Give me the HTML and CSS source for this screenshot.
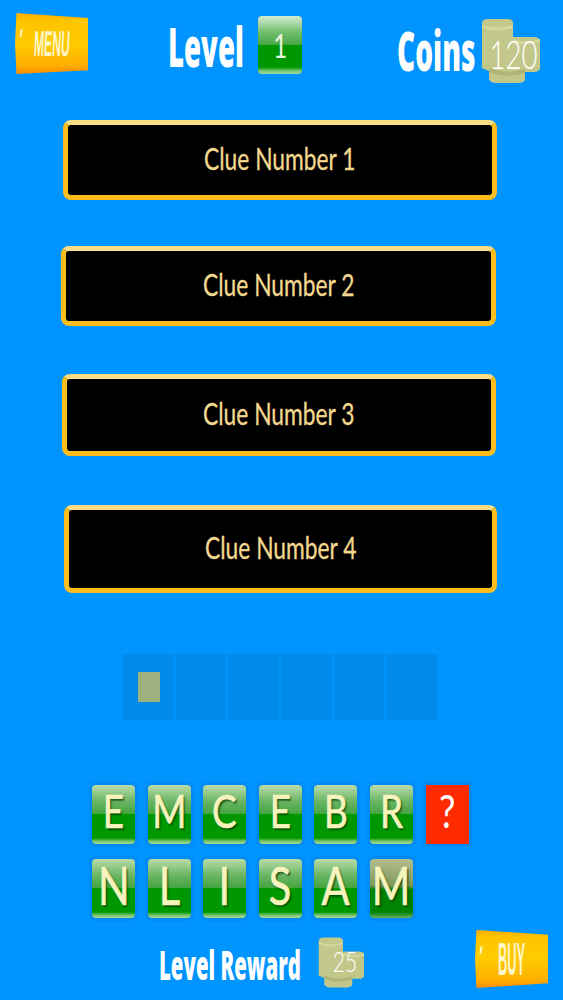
FILE: index.html
```html
<!DOCTYPE html>
<html lang="en">
<head>
    <meta charset="UTF-8">
    <meta name="viewport" content="width=device-width, initial-scale=1.0">
    <title>Clue Game</title>
    <link rel="stylesheet" href="styles.css">
</head>
<body>
    <svg class="defs" width="0" height="0">
        <symbol id="coins" viewBox="0 0 59 64">
            <path d="M1 4 Q1 0 8 0 L26 0 Q32 0 32 4 L32 18 L52 18 Q59 18 59 22 L59 49 Q59 53 52 53 L44 53 L44 60 Q44 64 36 64 L16 64 Q9 64 8 60 L8 52 L1 49 Z" fill="#c2c88a"/>
            <path d="M1 6 Q16 11 32 6 L32 9 Q16 14 1 9 Z" fill="#d2d69f"/>
            <path d="M32 20 Q45 25 59 20 L59 23 Q45 28 32 23 Z" fill="#d2d69f"/>
            <path d="M8 49 Q26 56 44 50 L44 54 Q26 60 8 53 Z" fill="#aeb577"/>
        </symbol>
    </svg>

    <div class="screen">
        <header class="top-bar">
            <button class="gold-btn menu-btn"><span>MENU</span></button>
            <div class="title level-title"><span>Level</span></div>
            <div class="level-tile"><span>1</span></div>
            <div class="title coins-title"><span>Coins</span></div>
            <div class="coin-stack">
                <svg><use href="#coins"/></svg>
                <span class="coin-count">120</span>
            </div>
        </header>

        <div class="clues">
            <div class="clue clue-1"><span>Clue Number 1</span></div>
            <div class="clue clue-2"><span>Clue Number 2</span></div>
            <div class="clue clue-3"><span>Clue Number 3</span></div>
            <div class="clue clue-4"><span>Clue Number 4</span></div>
        </div>

        <div class="slots">
            <div class="slot"><div class="slot-mark"></div></div>
            <div class="slot"></div>
            <div class="slot"></div>
            <div class="slot"></div>
            <div class="slot"></div>
            <div class="slot"></div>
        </div>

        <div class="letters">
            <div class="tile"><span>E</span></div>
            <div class="tile"><span>M</span></div>
            <div class="tile"><span>C</span></div>
            <div class="tile"><span>E</span></div>
            <div class="tile"><span>B</span></div>
            <div class="tile"><span>R</span></div>
            <div class="tile hint"><span>?</span></div>
            <div class="tile big"><span>N</span></div>
            <div class="tile big"><span>L</span></div>
            <div class="tile big"><span>I</span></div>
            <div class="tile big"><span>S</span></div>
            <div class="tile big"><span>A</span></div>
            <div class="tile big used"><span>M</span></div>
        </div>

        <footer class="bottom-bar">
            <div class="title reward-title"><span>Level Reward</span></div>
            <div class="coin-stack reward-stack">
                <svg><use href="#coins"/></svg>
                <span class="coin-count">25</span>
            </div>
            <button class="gold-btn buy-btn"><span>BUY</span></button>
        </footer>
    </div>
</body>
</html>
```

FILE: styles.css
```css
* {
    box-sizing: border-box;
}
body {
    margin: 0;
    background: #0094ff;
    font-family: "Lato", sans-serif;
}
.defs {
    position: absolute;
}
.screen {
    width: 563px;
    height: 1000px;
    overflow: hidden;
}

/* top bar */
.top-bar {
    display: flex;
    align-items: flex-start;
    height: 120px;
    padding: 13px 0 0 15px;
}
.gold-btn {
    position: relative;
    display: flex;
    align-items: center;
    justify-content: center;
    border: none;
    padding: 0;
    color: #fff6c8;
    font-family: "Liberation Sans", sans-serif;
    font-weight: bold;
    background: linear-gradient(180deg, #ffab00 0%, #ffc400 12%, #ffcb00 50%, #ffb000 85%, #ff8c00 100%);
}
.gold-btn::before {
    content: "";
    position: absolute;
    left: 5px;
    top: 16px;
    width: 2px;
    height: 8px;
    background: #fff3c0;
    transform: rotate(10deg);
}
.gold-btn span {
    display: inline-block;
}
.menu-btn {
    width: 73px;
    height: 61px;
    font-size: 36px;
    clip-path: polygon(2% 0, 100% 8%, 100% 94%, 2% 100%, 0 50%);
}
.menu-btn span {
    transform: scaleX(0.34) skewX(-8deg);
}
.title {
    color: #fff;
    font-family: "Open Sans", sans-serif;
    font-weight: 800;
    font-size: 54px;
    line-height: 56px;
    white-space: nowrap;
}
.title span {
    display: inline-block;
    transform-origin: left center;
    transform: scaleX(0.51);
}
.level-title {
    width: 90px;
    margin: 5px 0 0 80px;
}
.level-tile {
    display: flex;
    align-items: center;
    justify-content: center;
    width: 44px;
    height: 58px;
    margin-top: 3px;
    color: #e8f5e0;
    font-size: 32px;
    border-radius: 4px;
    background: linear-gradient(180deg, #d4ecd0 0%, #6dbb68 30%, #4aa846 49%, #009600 50%, #009600 88%, #7ccc78 95%, #a4dca0 100%);
}
.level-tile span {
    display: inline-block;
    transform: scaleX(0.75);
}
.coins-title {
    width: 84px;
    margin: 9px 0 0 95px;
}
.coins-title span {
    transform: scaleX(0.52);
}
.coin-stack {
    position: relative;
    width: 59px;
    height: 64px;
    margin-top: 6px;
}
.coin-stack svg {
    display: block;
    width: 100%;
    height: 100%;
}
.coin-count {
    position: absolute;
    left: -1px;
    right: -1px;
    top: 13px;
    color: #fff;
    font-size: 40px;
    font-weight: 300;
    line-height: 44px;
    text-align: center;
    transform: scaleX(0.69);
}

/* clue boxes */
.clue {
    display: flex;
    align-items: center;
    justify-content: center;
    padding-bottom: 4px;
    color: #f3d88f;
    font-size: 30px;
    background: #000;
    border: 5px solid #fdbd1a;
    border-top-color: #fbdc85;
    border-radius: 8px;
}
.clue span {
    display: inline-block;
    transform: scaleX(0.76);
    -webkit-text-stroke: 0.3px #f3d88f;
}
.clue-1 {
    width: 434px;
    height: 80px;
    margin-left: 63px;
}
.clue-2 {
    width: 435px;
    height: 80px;
    margin: 46px 0 0 61px;
}
.clue-3 {
    width: 434px;
    height: 82px;
    margin: 48px 0 0 62px;
}
.clue-4 {
    width: 433px;
    height: 88px;
    margin: 49px 0 0 64px;
}

/* answer slots */
.slots {
    display: flex;
    gap: 2px;
    width: 314px;
    height: 66px;
    margin: 61px 0 0 123px;
}
.slot {
    flex: 1;
    padding: 18px 0 0 15px;
    background: #008ae9;
}
.slot-mark {
    width: 22px;
    height: 30px;
    background: #9db27f;
}

/* letter tiles */
.letters {
    display: grid;
    grid-template-columns: repeat(7, 43px);
    grid-auto-rows: 59px;
    column-gap: 12.6px;
    row-gap: 15px;
    margin: 65px 0 0 92px;
}
.tile {
    display: flex;
    align-items: center;
    justify-content: center;
    padding-bottom: 7px;
    color: #f7f3bd;
    font-size: 46px;
    line-height: 1;
    border-radius: 4px;
    text-shadow: 2px 2px 2px rgba(0, 50, 0, 0.7);
    background: linear-gradient(180deg, #b9dcaa 0%, #6ab562 28%, #43a53f 49%, #009800 50%, #009800 90%, #76c46e 95%, #a4d898 100%);
    box-shadow: 0 0 0 3px rgba(0, 90, 170, 0.15);
}
.tile span {
    display: inline-block;
    transform: scaleX(0.8);
    -webkit-text-stroke: 0.7px #f7f3bd;
}
.tile.big {
    font-size: 52px;
}
.tile.hint {
    color: #fff;
    font-size: 46px;
    text-shadow: none;
    border-radius: 0;
    background: #ff2a00;
}
.tile.hint span {
    -webkit-text-stroke: 0;
}
.tile.used {
    background: linear-gradient(180deg, #b5bd8e 0%, #7d9a5c 45%, #008300 52%, #008300 90%, #6cb060 100%);
}

/* bottom bar */
.bottom-bar {
    display: flex;
    align-items: flex-start;
    margin-top: 12px;
    padding-left: 159px;
}
.reward-title {
    width: 159px;
    margin-top: 13px;
    font-size: 40px;
    line-height: 44px;
}
.reward-title span {
    transform: scaleX(0.51);
}
.reward-stack {
    width: 46px;
    height: 51px;
    margin-top: 7px;
}
.reward-stack .coin-count {
    left: 3px;
    right: -5px;
    top: 8px;
    font-size: 28px;
    line-height: 32px;
    transform: scaleX(0.75);
}
.buy-btn {
    width: 73px;
    height: 58px;
    margin-left: 111px;
    font-size: 46px;
    clip-path: polygon(2% 0, 100% 8%, 100% 92%, 2% 100%, 0 50%);
}
.buy-btn span {
    transform: scaleX(0.28);
}
```
